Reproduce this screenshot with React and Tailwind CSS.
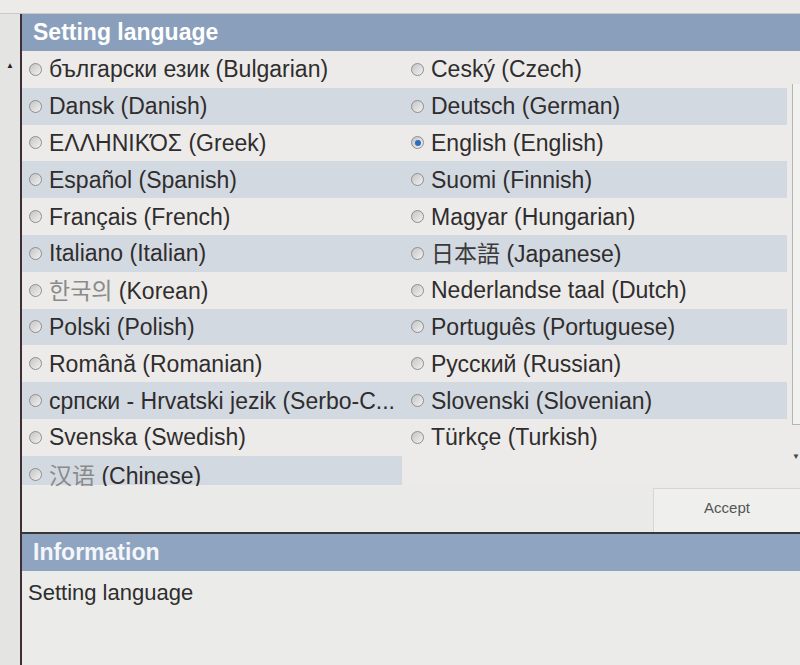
import React from "react";

const left = [
  { label: "български език (Bulgarian)" },
  { label: "Dansk (Danish)" },
  { label: "ΕΛΛΗΝΙΚΌΣ (Greek)" },
  { label: "Español (Spanish)" },
  { label: "Français (French)" },
  { label: "Italiano (Italian)" },
  { native: "한국의", label: " (Korean)", faint: true },
  { label: "Polski (Polish)" },
  { label: "Română (Romanian)" },
  { label: "српски - Hrvatski jezik (Serbo-C..." },
  { label: "Svenska (Swedish)" },
  { native: "汉语", label: " (Chinese)", faint: true },
];

const right = [
  { label: "Ceský (Czech)" },
  { label: "Deutsch (German)" },
  { label: "English (English)", checked: true },
  { label: "Suomi (Finnish)" },
  { label: "Magyar (Hungarian)" },
  { native: "日本語", label: " (Japanese)" },
  { label: "Nederlandse taal (Dutch)" },
  { label: "Português (Portuguese)" },
  { label: "Русский (Russian)" },
  { label: "Slovenski (Slovenian)" },
  { label: "Türkçe (Turkish)" },
];

const Radio = ({ checked }) => (
  <span className="w-[13px] h-[13px] rounded-full border border-[#8e8e8e] bg-gradient-to-br from-[#c4c4c4] to-[#f2f2f2] flex items-center justify-center shrink-0">
    {checked && <span className="w-[6px] h-[6px] rounded-full bg-[#2c6cc2]" />}
  </span>
);

const Cell = ({ item, shaded, pad, last }) => (
  <div
    className={`flex gap-[7px] whitespace-nowrap ${pad} ${
      last ? "h-[29px] items-start pt-[5px]" : "h-[36.8px] items-center"
    } ${shaded ? "bg-[#d3d9e1]" : ""}`}
  >
    <span className={last ? "mt-[7px]" : ""}>
      <Radio checked={item.checked} />
    </span>
    <span className="text-[23px] leading-[26px] text-[#2f2d2d]">
      {item.native && (
        <span
          className={`${item.faint ? "text-[#8a8a8a]" : "text-[#3a3a3a]"}`}
          style={{ fontFamily: '"Noto Sans CJK SC", "Noto Sans CJK KR", "Noto Sans CJK JP", sans-serif' }}
        >
          {item.native}
        </span>
      )}
      {item.label}
    </span>
  </div>
);

const App = () => {
  const rows = left.map((l, i) => ({ l, r: right[i], shaded: i % 2 === 1 }));

  return (
    <div
      className="w-[800px] h-[665px] overflow-hidden bg-[#e9e9e7] flex flex-col"
      style={{ fontFamily: '"Liberation Sans", Arial, sans-serif' }}
    >
      {/* top strip */}
      <div className="h-[14px] shrink-0 bg-[#ecebe8] border-b border-[#c9c9c9]" />

      <div className="flex flex-1">
        {/* left margin */}
        <div className="w-[20px] shrink-0 bg-[#e4e4e2] flex justify-center pt-[48px]">
          <span className="text-[8px] leading-none text-[#222]">▲</span>
        </div>

        <div className="flex-1 flex flex-col border-l-2 border-[#3d2f35]">
          {/* Setting language header */}
          <div className="h-[37px] bg-[#8a9fbc] flex items-center pl-[11px]">
            <span className="text-[23px] font-bold text-white">Setting language</span>
          </div>

          {/* list + scrollbar */}
          <div className="flex h-[435px]">
            <div className="flex-1 bg-[#ecebe9]">
              {rows.map((row, i) => (
                <div key={i} className="grid grid-cols-[380px_1fr]">
                  <Cell item={row.l} shaded={row.shaded} pad="pl-[7px]" last={i === rows.length - 1} />
                  {row.r ? (
                    <Cell item={row.r} shaded={row.shaded} pad="pl-[9px]" />
                  ) : (
                    <div />
                  )}
                </div>
              ))}
            </div>
            <div className="w-[13px] shrink-0 bg-[#ecebe9] flex flex-col items-end">
              <div className="h-[33px]" />
              <div className="w-[8px] h-[341px] border-l border-b border-[#b5b5b5] bg-[#f1f1ef]" />
              <span className="mt-[28px] text-[8px] leading-none text-[#444]">▼</span>
            </div>
          </div>

          {/* accept bar */}
          <div className="h-[48px] flex border-b-2 border-[#383636] bg-[#eaeae8]">
            <div className="flex-1" />
            <div className="w-[147px] mt-[2px] bg-[#efefed] border-l border-t border-[#d6d6d4] flex items-center justify-center">
              <span className="text-[15px] text-[#555] -mt-[4px]">Accept</span>
            </div>
          </div>

          {/* Information */}
          <div className="h-[37px] bg-[#8ea4c1] flex items-center pl-[11px]">
            <span className="text-[23px] font-bold text-white/90">Information</span>
          </div>
          <div className="flex-1 bg-[#ebebe9] pl-[6px] pt-[5px]">
            <span className="text-[22px] text-[#2e2e2e]">Setting language</span>
          </div>
        </div>
      </div>
    </div>
  );
};

export default App;
